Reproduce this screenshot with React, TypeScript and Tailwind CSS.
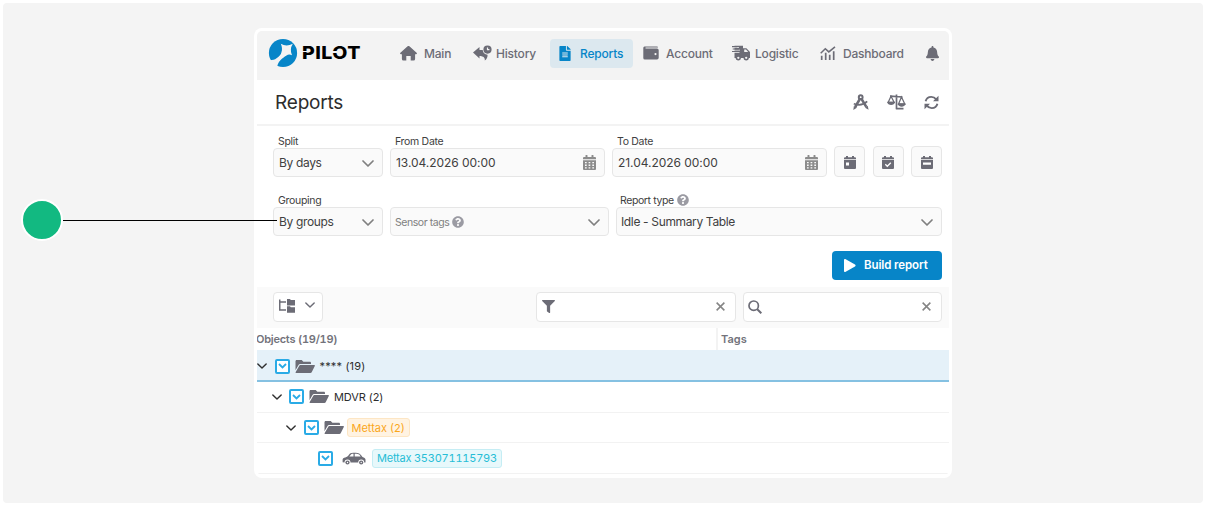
import type { ReactNode } from 'react'
import clsx from 'clsx'
import { FaBell, FaFileAlt, FaFilter, FaQuestionCircle } from 'react-icons/fa'

interface IconProps {
  className?: string
}

function Chevron({ className }: IconProps) {
  return (
    <svg viewBox="0 0 12 7" className={className} fill="none" stroke="currentColor" strokeWidth="1.7" strokeLinecap="round" strokeLinejoin="round">
      <path d="M1 1l5 5 5-5" />
    </svg>
  )
}

function Logo() {
  return (
    <svg viewBox="0 0 30 30" className="size-[30px] shrink-0">
      <circle cx="15" cy="15" r="14.100" fill="#0785c8" />
      <path fill="#f3f3f3" d="M12.800 5.800Q18.500 9 24.800 5.800Q21.300 11.500 24 17.300Q21 15.800 18.500 17.500C14 20.500 10.500 22.500 9.200 28.500L8.800 30 0 27v-4.800c3.500.3 6.500-.2 8.500-1.900 2.500-1.900 4.500-3.300 5-6.300Q14.800 10.500 12.800 5.800z" />
    </svg>
  )
}

function HomeIcon({ className }: IconProps) {
  return (
    <svg viewBox="0 0 17 15" className={className} fill="currentColor">
      <path d="M7.600.3a1.300 1.300 0 0 1 1.800 0l7.200 6.500c.7.700.3 1.500-.6 1.500h-.9V13a1.600 1.600 0 0 1-1.600 1.600h-2.800V10H6.300v4.600H3.500A1.600 1.600 0 0 1 1.900 13V8.300H1c-.9 0-1.300-.8-.6-1.500z" />
    </svg>
  )
}

function HistoryIcon({ className }: IconProps) {
  return (
    <svg viewBox="0 0 19 16" className={className} fill="currentColor">
      <path d="M0 7.500 6.500 2v3h3.200c.3 2.900 2 4.500 4.800 4.700.4 2.100-.8 4.500-2.700 5.800.3-2.600-1.100-4.400-5.300-4.500v2.500z" />
      <path fillRule="evenodd" d="M14.500.5a4.100 4.100 0 1 1 0 8.200 4.100 4.100 0 0 1 0-8.200zm-.6 1.900v2.800h2.500V4.100h-1.300V2.400z" />
    </svg>
  )
}

function WalletIcon({ className }: IconProps) {
  return (
    <svg viewBox="0 0 16 14" className={className} fill="currentColor">
      <path fillRule="evenodd" d="M1.500.5H14a1 1 0 0 1 1 1H2.500v1H14a1.700 1.700 0 0 1 1.700 1.700v7.600a1.700 1.700 0 0 1-1.700 1.700H1.800A1.500 1.500 0 0 1 .3 12V2A1.500 1.500 0 0 1 1.500.5zM12.500 7a1.100 1.100 0 1 0 0 2.200 1.100 1.100 0 0 0 0-2.200z" />
    </svg>
  )
}

function TruckIcon({ className }: IconProps) {
  return (
    <svg viewBox="0 0 19 16" className={className}>
      <path fill="currentColor" d="M2.500.8H11v2.400h3.400L18 7v6H2.500z" />
      <path fill="#f3f3f3" d="M12.200 4.500H14l2.200 2.600h-4zM0 2.300h7v.8H0zM0 4.800h8v.8H0zM0 7.300h7.500v.8H0z" />
      <path stroke="currentColor" strokeWidth="1.200" d="M0 1.600h5M.7 4h6M0 6.500h6" />
      <circle cx="6.300" cy="12.800" r="1.900" fill="#f3f3f3" stroke="currentColor" strokeWidth="1.500" />
      <circle cx="14.200" cy="12.800" r="1.900" fill="#f3f3f3" stroke="currentColor" strokeWidth="1.500" />
    </svg>
  )
}

function ChartIcon({ className }: IconProps) {
  return (
    <svg viewBox="0 0 16 14" className={className} fill="none" stroke="currentColor">
      <path strokeWidth="1.500" d="M.7 7.300 5.300 2.700l3.500 3.200L15 .8" />
      <path strokeWidth="1.700" d="M1.700 14V9.800M5.700 14V6.700M9.700 14V8.700M13.700 14V5.300" />
    </svg>
  )
}

function CompassIcon({ className }: IconProps) {
  return (
    <svg viewBox="0 0 16 16" className={className} fill="none" stroke="currentColor">
      <circle cx="7.700" cy="3.200" r="1.900" strokeWidth="2" />
      <path strokeWidth="2.600" d="M6.900 4.800 2.200 13M8.500 4.800l4.800 8" />
      <path strokeWidth="1.700" d="M.8 9.800c4.500 1.700 9.700 1 13.400-2.500" />
      <path fill="currentColor" stroke="none" d="m.9 12 3 1.700L.3 16zm13.800-.2L12 13.700l3.600 2.100z" />
    </svg>
  )
}

function ScalesIcon({ className }: IconProps) {
  return (
    <svg viewBox="0 0 19 16" className={className} fill="none" stroke="currentColor">
      <path strokeWidth="1.700" d="M3 2.100 15.500 3M9.500.5v14.700M9 14.600h7.500" />
      <path strokeWidth="1.300" d="M4 2.300 1.200 8.300h5.900zM14.500 3l-3 7h6.300z" />
      <path fill="currentColor" stroke="none" d="M.2 7.800h7.800c-.2 4.300-7.600 4.300-7.800 0zM10.700 9.600h7.900c-.2 4.200-7.700 4.200-7.900 0z" />
    </svg>
  )
}

function RefreshIcon({ className }: IconProps) {
  return (
    <svg viewBox="0 0 15 15" className={className} fill="none" stroke="currentColor" strokeWidth="1.900">
      <path d="M1.600 6.300C2.300 3.500 4.500 1.900 7.300 1.900c2.200 0 3.700 1 4.900 2.500M13.400 8.700c-.7 2.800-2.900 4.400-5.700 4.400-2.200 0-3.700-1-4.900-2.500" />
      <path fill="currentColor" stroke="none" d="M14.500.8v5.500H9zM.5 14.200V8.700H6z" />
    </svg>
  )
}

function DateIcon() {
  return (
    <svg viewBox="0 0 13 15" className="h-[15px] w-[13px] text-[#8c8c8c]">
      <path fill="currentColor" d="M2.500.8a1 1 0 0 1 2 0V2h4V.8a1 1 0 0 1 2 0V2H12a1 1 0 0 1 1 1v1.300H0V3a1 1 0 0 1 1-1h1.500zM0 5.200h13V14a1 1 0 0 1-1 1H1a1 1 0 0 1-1-1z" />
      <path fill="#fafafa" d="M2 6.900h1.700v1.300H2zM5.600 6.900h1.700v1.300H5.600zM9.300 6.900H11v1.300H9.300zM2 9.600h1.700v1.300H2zM5.600 9.600h1.700v1.300H5.600zM9.300 9.600H11v1.300H9.300zM2 12.200h1.700v1.200H2zM5.600 12.200h1.700v1.200H5.600zM9.300 12.200H11v1.200H9.300z" />
    </svg>
  )
}

function CalendarButton({ children }: { children: ReactNode }) {
  return (
    <button className="flex size-[31px] items-center justify-center rounded-[4px] border border-[#e6e6e6] bg-[#fafafa] pt-0.5 text-[#6c6c76]">
      <svg viewBox="0 0 12 13" className="h-[13px] w-3">
        <path fill="currentColor" d="M2 0h2v1.300h4V0h2v1.300h1a1 1 0 0 1 1 1v1H0v-1a1 1 0 0 1 1-1h1zM0 4.100h12V12a1 1 0 0 1-1 1H1a1 1 0 0 1-1-1z" />
        {children}
      </svg>
    </button>
  )
}

function TreeIcon({ className }: IconProps) {
  return (
    <svg viewBox="0 0 16 14" className={className} fill="currentColor">
      <path d="M0 .5h1.500v1.800H7v1.400H1.500v6.600H7v1.400H0zM8 0h3l.8 1H16v5.500H8zM8 7.300h3l.8 1H16v5.500H8z" />
    </svg>
  )
}

function FolderIcon() {
  return (
    <svg viewBox="0 0 20 13" className="mr-[5px] ml-[5px] h-[13px] w-5 shrink-0 text-[#6c6c76]" fill="currentColor">
      <path d="M.5 1.300C.5.600 1 0 1.700 0h5l1.700 1.700h6.400c.7 0 1.200.5 1.200 1.200v1.200H5.200c-.8 0-1.400.4-1.800 1.100L.5 10.300z" />
      <path d="M4.300 5.700c.2-.4.6-.7 1-.7h13.900c.5 0 .8.500.6 1l-3.100 6.200c-.3.500-.7.800-1.300.8H1.200c-.5 0-.8-.5-.5-1z" />
    </svg>
  )
}

function CarIcon({ className }: IconProps) {
  return (
    <svg viewBox="0 0 24 13" className={className}>
      <path fill="currentColor" d="M.6 10.300V7.600c0-1.200.9-1.900 2.700-2.200C6 4.900 6.300 3.200 8 1.500 9.100.5 15.300.3 17.200 1.500c1.300.9 2.300 2.200 3.300 3.400 1.700.5 2.900 1.200 3 2.500v3h-1.300a3 3 0 0 0-6 0H8.500a3 3 0 0 0-6 0z" />
      <path fill="#fff" d="M7.300 4.500 9.200 2.300c.6-.5 1.300-.6 2.300-.6v2.900zM12.700 1.700c2.600 0 3.600.1 4.600.9l1.400 1.900-6 .1z" />
      <circle cx="5.500" cy="10.500" r="2.100" fill="currentColor" />
      <circle cx="19.200" cy="10.500" r="2.100" fill="currentColor" />
      <circle cx="5.500" cy="10.500" r=".7" fill="#fff" />
      <circle cx="19.200" cy="10.500" r=".7" fill="#fff" />
    </svg>
  )
}

const NAV = [
  { label: 'Main', box: 'w-[72px]', slot: 'w-[23px]', icon: <HomeIcon className="-ml-px h-[15px] w-[17px]" /> },
  { label: 'History', box: 'w-[77px]', slot: 'w-[23px]', icon: <HistoryIcon className="h-4 w-[19px]" /> },
  { label: 'Reports', box: 'w-[83px] mr-[10px] pl-[9px]', slot: 'w-[21px]', icon: <FaFileAlt className="h-[15px] w-3" />, active: true },
  { label: 'Account', box: 'w-[89px]', slot: 'w-[23px]', icon: <WalletIcon className="h-[14px] w-4" /> },
  { label: 'Logistic', box: 'w-[88px]', slot: 'w-[23px]', icon: <TruckIcon className="h-4 w-[19px]" /> },
  { label: 'Dashboard', box: 'w-[106px]', slot: 'w-[23px]', icon: <ChartIcon className="h-[14px] w-4" /> },
]

function Field({ label, value, width, help, children }: { label?: ReactNode; value: ReactNode; width: string; help?: boolean; children: ReactNode }) {
  return (
    <div className={clsx('flex flex-col', width)}>
      <div className="flex h-[14px] items-center gap-[3px] pt-0.5 pl-[5px] text-[10.500px] leading-[14px] tracking-[-0.300px] text-[#404040]">
        {help ? <span className="-ml-px tracking-[-0.400px]">{label}</span> : label}
        {help && <FaQuestionCircle className="mb-0.5 size-3 text-[#9b9ba3]" />}
      </div>
      <div className="flex h-[29px] items-center justify-between rounded-[4px] border border-[#e6e6e6] bg-[#fafafa] pr-2 pl-[5px] text-[12px] tracking-[-0.350px] text-[#404040]">
        {value}
        {children}
      </div>
    </div>
  )
}

function SelectArrow() {
  return <Chevron className="mt-px h-[7px] w-3 text-[#808080]" />
}

function TreeRow({ indent, arrow = true, selected, children }: { indent: string; arrow?: boolean; selected?: boolean; children: ReactNode }) {
  return (
    <div
      className={clsx(
        'flex items-center border-b text-[11px] text-[#2d2d2d]',
        indent,
        selected ? 'h-8 border-b-2 border-[#85c1e2] bg-[#e5f1f9] pt-0.5' : 'h-[30.700px] border-[#f2f2f2]',
      )}
    >
      {arrow && <Chevron className="mr-[7.500px] h-1.5 w-[10px] shrink-0 text-[#303030]" />}
      <span className="flex size-[15px] shrink-0 items-center justify-center rounded-[2px] border-2 border-[#2aabe6] bg-white text-[#2aabe6]">
        <svg viewBox="0 0 9 6" className="h-1.5 w-[9px]" fill="none" stroke="currentColor" strokeWidth="1.800">
          <path d="m1 1 3.500 3.500L8 1" />
        </svg>
      </span>
      {children}
    </div>
  )
}

function SearchBox({ width, icon }: { width: string; icon: ReactNode }) {
  return (
    <div className={clsx('flex h-[30px] items-center justify-between rounded-[4px] border border-[#e6e6e6] bg-white pr-[10px] pb-px pl-1', width)}>
      {icon}
      <svg viewBox="0 0 10 10" className="size-[9px]" stroke="#858585" strokeWidth="1.700">
        <path d="M.7.7l8.600 8.600M9.300.7.700 9.300" />
      </svg>
    </div>
  )
}

export default function App() {
  return (
    <div className="h-[506px] w-[1206px] overflow-hidden bg-white p-[3px] font-['Inter',sans-serif]">
      <div className="relative h-[500px] rounded-[4px] bg-[#f4f4f4] pt-[25px] pl-[251px]">
        <div className="h-[450px] w-[698px] rounded-[8px] bg-white p-[3px]">
          <div className="flex h-[444px] flex-col overflow-hidden rounded-[5px] bg-white">
            <header className="flex h-[49px] shrink-0 items-center bg-[#f3f3f3] pb-[5px] text-[#6c6c76]">
              <div className="flex w-36 items-center pl-[11px]">
                <Logo />
                <span className="relative ml-[4px] origin-left scale-x-[1.150] text-[17px] leading-none font-extrabold tracking-[0.400px] text-black">
                  PILOT
                  {/* stencil cuts in the P and the O */}
                  <span className="absolute top-[6px] left-0 h-px w-[5px] bg-[#f3f3f3]" />
                  <span className="absolute top-[6px] left-[26px] h-[2px] w-[5px] bg-[#f3f3f3]" />
                </span>
              </div>
              <nav className="flex text-[12px] font-medium tracking-[-0.200px]">
                {NAV.map((item) => (
                  <a key={item.label} className={clsx('flex h-[29px] items-center rounded-[4px]', item.box, item.active && 'bg-[#dce8ef] text-[#0785c8]')}>
                    <span className={clsx('shrink-0', item.slot)}>{item.icon}</span>
                    <span className="pt-px">{item.label}</span>
                  </a>
                ))}
              </nav>
              <FaBell className="h-[15px] w-[13px]" />
            </header>

            <div className="flex h-[46px] shrink-0 items-center justify-between border-b-2 border-[#f3f3f3] pr-[10px] pl-[18px]">
              <h1 className="pt-0.5 text-[19px] tracking-[-0.200px] text-[#2d2d2d]">Reports</h1>
              <div className="flex items-center text-[#6c6c76]">
                <CompassIcon className="mr-[18px] size-4" />
                <ScalesIcon className="mr-[18px] h-4 w-[19px]" />
                <RefreshIcon className="size-[15px]" />
              </div>
            </div>

            <div className="flex h-[161px] shrink-0 flex-col pr-[7px] pl-4">
              <div className="flex items-end gap-[7px] pt-2">
                <Field label="Split" value="By days" width="w-[110px]"><SelectArrow /></Field>
                <Field label="From Date" value={<span className="tracking-[-0.050px]">13.04.2026 00:00</span>} width="w-[215px]"><DateIcon /></Field>
                <Field label="To Date" value={<span className="tracking-[-0.050px]">21.04.2026 00:00</span>} width="w-[215px]"><DateIcon /></Field>
                <div className="flex flex-1 justify-between">
                  <CalendarButton><path fill="#fff" d="M2 6.500h3v3H2z" /></CalendarButton>
                  <CalendarButton><path fill="none" stroke="#fff" strokeWidth="1.300" d="m3.300 8.300 2 2 3.500-3.600" /></CalendarButton>
                  <CalendarButton><path fill="#fff" d="M2 6.500h8v2.300H2z" /></CalendarButton>
                </div>
              </div>
              <div className="flex gap-[7px] pt-4">
                <Field label="Grouping" value="By groups" width="w-[110px]"><SelectArrow /></Field>
                <Field
                  value={
                    <span className="-ml-px flex items-center gap-[3px] text-[10.500px] tracking-[-0.450px] text-[#808080]">
                      <span className="pt-0.5">Sensor tags</span>
                      <FaQuestionCircle className="size-3 text-[#9b9ba3]" />
                    </span>
                  }
                  width="w-[219px]"
                >
                  <SelectArrow />
                </Field>
                <Field label="Report type" help value={<span className="-ml-px">Idle - Summary Table</span>} width="w-[326px]"><SelectArrow /></Field>
              </div>
              <button className="mt-[15px] ml-auto flex h-[29px] w-[110px] shrink-0 items-center rounded-[4px] bg-[#0785c8] pl-3 text-[11.500px] font-semibold tracking-[-0.100px] text-white">
                <svg viewBox="0 0 12 13" className="mr-2 h-[13px] w-3" fill="currentColor">
                  <path d="M0 1.300C0 .2.800-.2 1.700.3l9.300 5.300c.8.500.8 1.300 0 1.800l-9.300 5.300c-.9.500-1.700.1-1.700-1z" />
                </svg>
                Build report
              </button>
            </div>

            <div className="flex h-[41px] shrink-0 items-center bg-[#fafafa] pr-[7px] pb-px pl-4">
              <button className="mr-auto flex h-[30px] w-[50px] items-center justify-between rounded-[4px] border border-[#e6e6e6] bg-white pr-[7px] pb-0.5 pl-[5px] text-[#6c6c76]">
                <TreeIcon className="h-[14px] w-4" />
                <Chevron className="mb-0.5 h-[6px] w-[10px]" />
              </button>
              <SearchBox width="w-[200px] mr-[7px]" icon={<FaFilter className="ml-px size-[13px] text-[#6c6c76]" />} />
              <SearchBox
                width="w-[199px]"
                icon={
                  <svg viewBox="0 0 14 14" className="size-[14px]" fill="none" stroke="#6c6c76" strokeWidth="1.700">
                    <circle cx="5.700" cy="5.700" r="4.700" />
                    <path strokeWidth="2" d="m9 9 4.300 4.300" />
                  </svg>
                }
              />
            </div>

            <div className="flex h-[22px] shrink-0 items-center text-[11px] font-semibold text-[#73737b]">
              <div className="w-[459px]"><span className="-ml-px tracking-[-0.250px] tabular-nums">Objects (19/19)</span></div>
              <div className="flex h-full flex-1 items-center border-l-2 border-[#f3f3f3] pl-[3px]">Tags</div>
            </div>

            <div className="flex flex-col">
              <TreeRow indent="pl-0" selected>
                <FolderIcon />
                <span className="tracking-[0.150px]">**** (19)</span>
              </TreeRow>
              <TreeRow indent="pl-[14.500px]">
                <FolderIcon />
                <span className="tracking-[-0.100px]">MDVR (2)</span>
              </TreeRow>
              <TreeRow indent="pl-[29px]">
                <FolderIcon />
                <span className="-ml-0.5 flex h-[19px] items-center rounded-[3px] border border-[#fde6c4] bg-[#fff3e2] px-1 pt-px text-[#faa61a]">Mettax (2)</span>
              </TreeRow>
              <TreeRow indent="pl-[61px]" arrow={false}>
                <CarIcon className="mr-1.5 ml-[9px] h-[13px] w-6 text-[#6c6c76]" />
                <span className="flex h-[19px] items-center rounded-[3px] border border-[#c5edf4] bg-[#e7f8fb] px-1 pt-px tracking-[-0.220px] text-[#26bdd6] tabular-nums">Mettax 353071115793</span>
              </TreeRow>
            </div>
          </div>
        </div>

        {/* callout marker pointing at the Grouping field */}
        <div className="absolute top-[196px] left-[18px] flex items-center">
          <span className="size-[42px] rounded-full border-2 border-white bg-[#12b981]" />
          <span className="h-px w-[214px] bg-black" />
        </div>
      </div>
    </div>
  )
}
